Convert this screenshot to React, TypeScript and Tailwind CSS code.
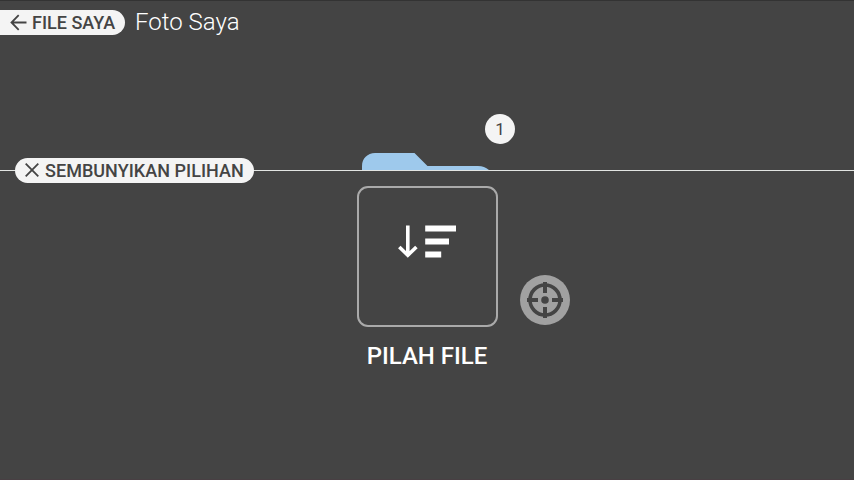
function BackIcon() {
  return (
    <svg className="block h-[17px] w-[17px] shrink-0" viewBox="0 0 17 17" fill="none" stroke="#444444" strokeWidth="1.8">
      <path d="M16.5 8.5H1.8M8.7 1.2L1.5 8.5L8.7 15.8" />
    </svg>
  );
}

function CloseIcon() {
  return (
    <svg className="-mt-px block h-[14px] w-[14px] shrink-0" viewBox="0 0 14 14" fill="none" stroke="#444444" strokeWidth="1.8">
      <path d="M0.7 0.7L13.3 13.3M13.3 0.7L0.7 13.3" />
    </svg>
  );
}

function SortIcon() {
  return (
    <svg className="block h-[34px] w-[60px]" viewBox="0 0 60 34" fill="none">
      <path d="M10.8 0.5V30M2.3 22L10.8 30.2L19.4 22" stroke="#ffffff" strokeWidth="3.6" />
      <path d="M28.2 0.4H59V6.6H28.2ZM28.2 13.4H52V19.4H28.2ZM28.2 26.4H44.2V32.6H28.2Z" fill="#ffffff" />
    </svg>
  );
}

function TargetIcon() {
  return (
    <svg className="block h-[50px] w-[50px]" viewBox="0 0 50 50" fill="none">
      <circle cx="25" cy="25" r="25" fill="#a1a1a1" />
      <circle cx="25" cy="25" r="15" stroke="#444444" strokeWidth="3.6" />
      <path d="M25 7V18M25 32V43M7 25H18M32 25H43" stroke="#444444" strokeWidth="4" />
      <circle cx="25" cy="25" r="3.8" fill="#444444" />
    </svg>
  );
}

export default function App() {
  return (
    <main className="relative flex h-[480px] w-[854px] flex-col overflow-hidden border-y border-t-[#333333] border-b-[#483f43] bg-[#444444] font-[Roboto,sans-serif]">
      <header className="flex h-[34px] shrink-0 items-end">
        <button className="flex h-[25px] w-[125px] items-center rounded-r-full bg-[#f4f4f4] pl-[10px] text-[18px] leading-[25px] font-medium whitespace-nowrap text-[#444444]">
          <BackIcon />
          <span className="ml-[5px]">FILE SAYA</span>
        </button>
        <h1 className="ml-[10px] text-[24px] leading-[25px] font-light text-white">Foto Saya</h1>
      </header>

      <section className="relative flex h-[136px] shrink-0 flex-col justify-end border-b border-[#e2e5e2]">
        <div className="relative ml-[362px] h-[17px] w-[130px]">
          <svg className="block h-[17px] w-[130px]" viewBox="0 0 130 17">
            <path d="M0 17V13C0 5.5 5.5 0 13 0H52.5L65.5 13H116C120.5 13 123.7 14.4 127 17Z" fill="#9ec9ec" />
          </svg>
          <span className="absolute top-[-39.5px] left-[123px] flex h-[30px] w-[30px] items-center justify-center rounded-full bg-[#f4f4f4] pt-px text-[17px] leading-none text-[#444444]">1</span>
        </div>
        <button className="absolute top-[123px] left-[15px] flex h-[25px] w-[239px] items-center rounded-full bg-[#f4f4f4] pl-[10px] text-[18px] leading-[25px] font-medium tracking-[0.03px] whitespace-nowrap text-[#444444]">
          <CloseIcon />
          <span className="ml-[6px]">SEMBUNYIKAN PILIHAN</span>
        </button>
      </section>

      <section className="flex flex-col items-center pt-[15px]">
        <button className="flex h-[141px] w-[141px] justify-center rounded-[11px] border-2 border-[#aaaaaa] pt-[37px]">
          <SortIcon />
        </button>
        <h2 className="mt-[15px] text-[24px] leading-[28px] font-medium text-white">PILAH FILE</h2>
      </section>

      <button className="absolute top-[274px] left-[520px]">
        <TargetIcon />
      </button>
    </main>
  );
}
